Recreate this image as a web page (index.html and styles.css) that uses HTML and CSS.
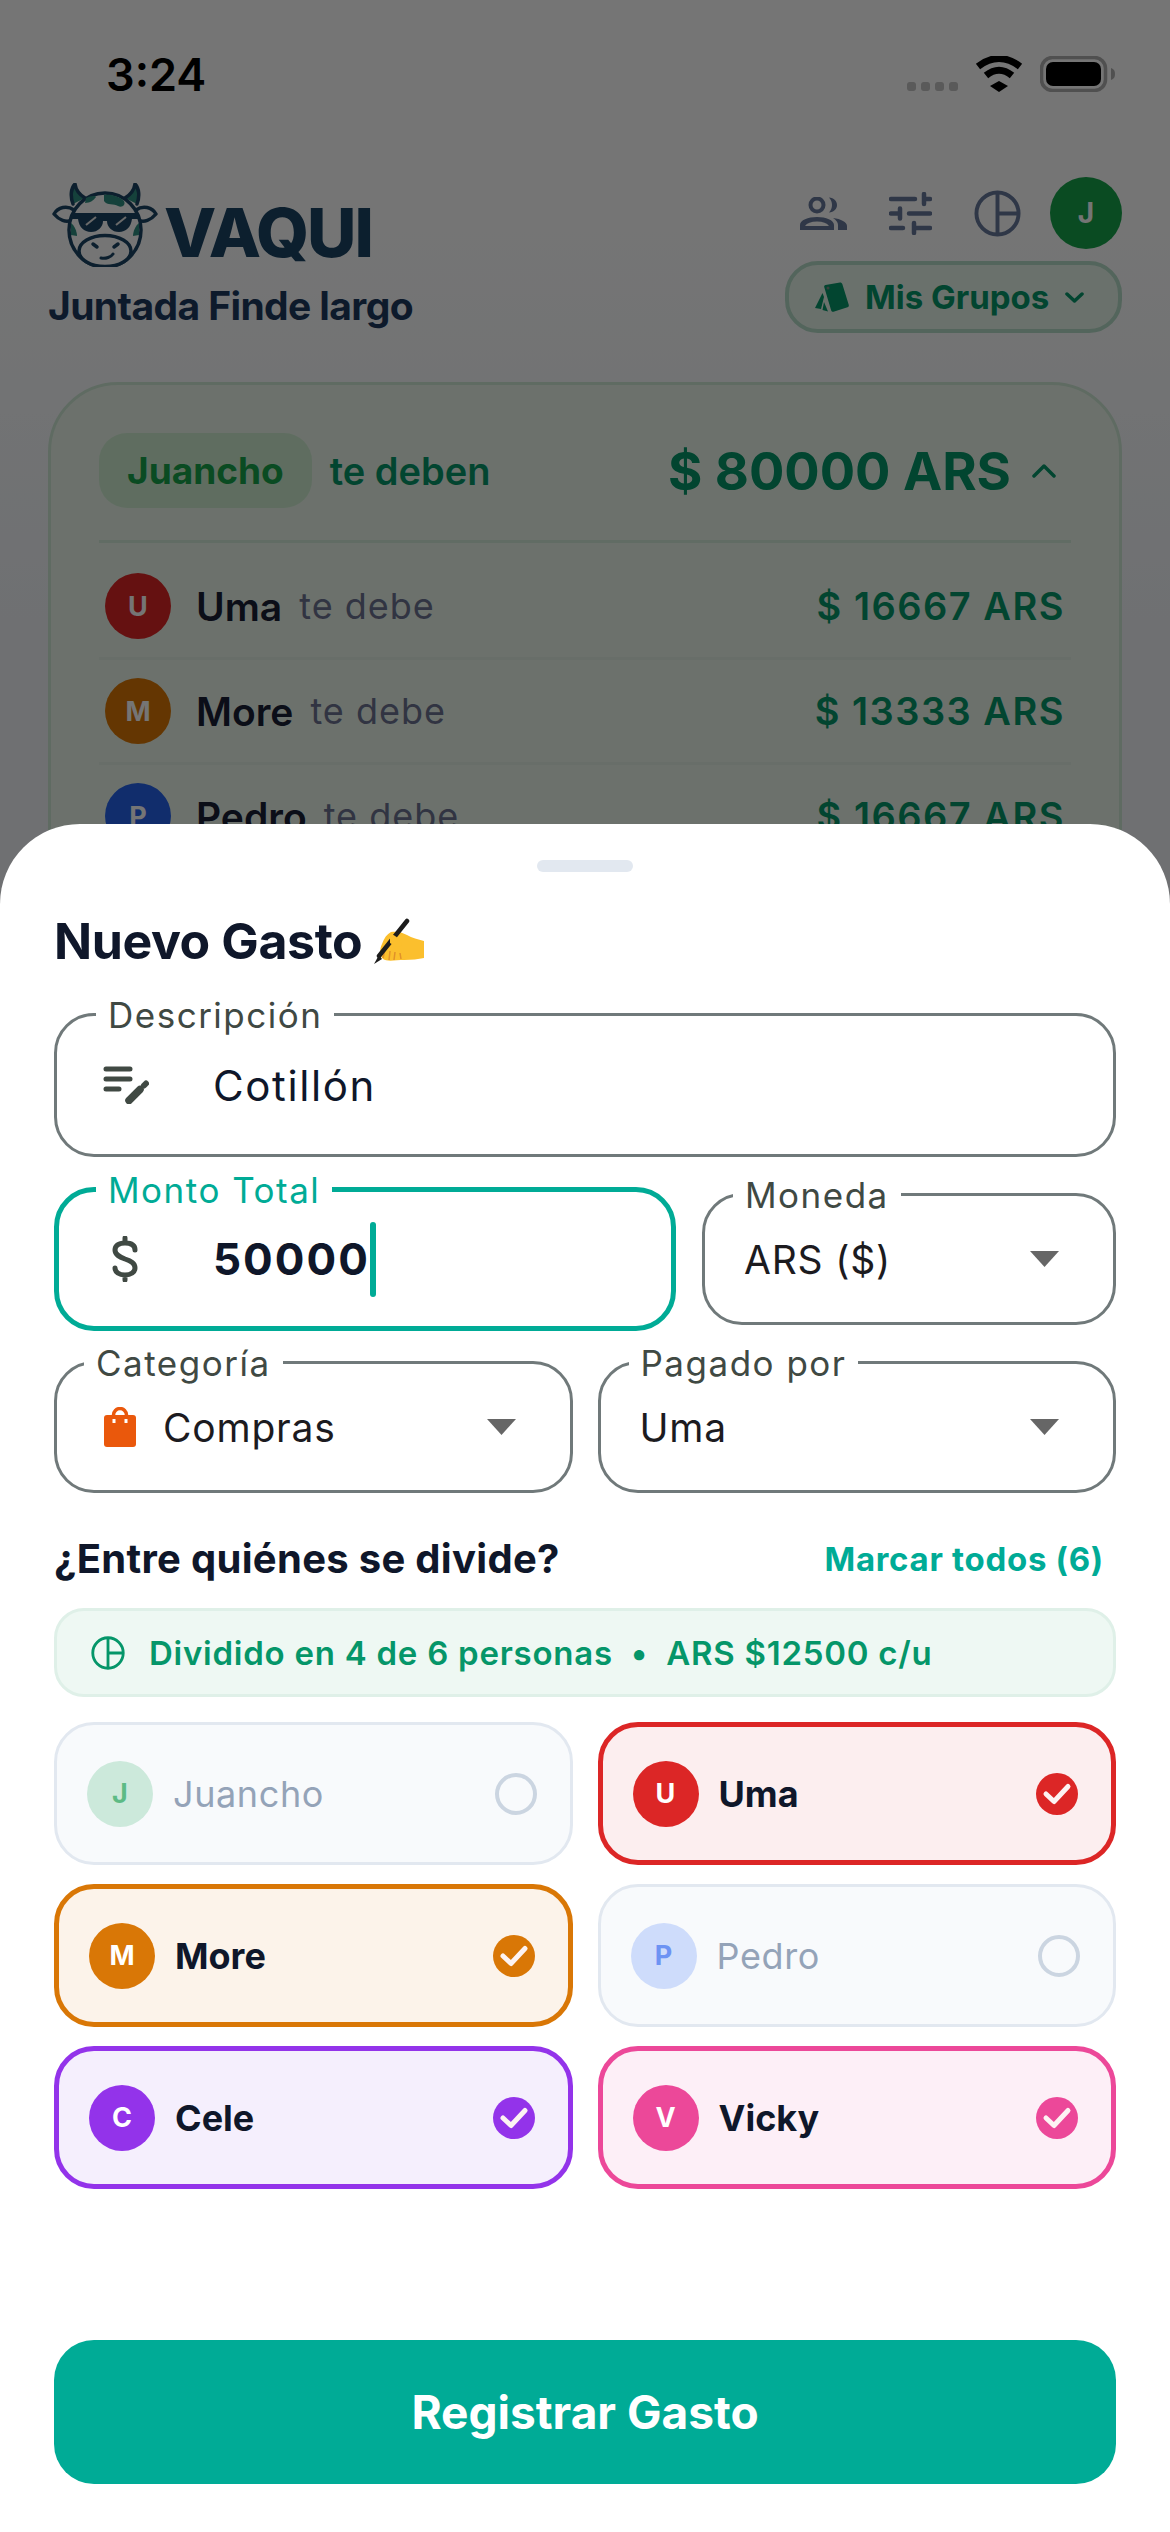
FILE: index.html

```html
<!DOCTYPE html>
<html lang="es">
<head>
  <meta charset="UTF-8" />
  <meta name="viewport" content="width=device-width, initial-scale=1.0" />
  <title>Vaqui - Nuevo Gasto</title>
  <link rel="stylesheet" href="styles.css">
</head>
<body>
  <svg class="sprites" width="0" height="0">
    <symbol id="pie" viewBox="0 0 48 48">
      <circle cx="24" cy="24" r="21.5" fill="none" stroke="currentColor" stroke-width="4" />
      <path d="M24 3V45M24 24H45" fill="none" stroke="currentColor" stroke-width="4" />
    </symbol>
    <symbol id="check" viewBox="0 0 42 42">
      <circle cx="21" cy="21" r="21" fill="currentColor" />
      <path d="M10 21L18 28.5L32 13.5" fill="none" stroke="#fdf3f3" stroke-width="5" stroke-linecap="round" stroke-linejoin="round" />
    </symbol>
    <symbol id="arrow" viewBox="0 0 29 16">
      <path d="M0 0H29L14.5 16Z" fill="#666" />
    </symbol>
  </svg>

  <div class="screen">
    <!-- the page behind the sheet -->
    <div class="backdrop">
      <div class="status-bar">
        <span class="clock">3:24</span>
        <div class="status-icons">
          <div class="signal"><i></i><i></i><i></i><i></i></div>
          <svg class="wifi" width="48" height="36" viewBox="0 0 48 36">
            <path d="M3 10.5Q24 -5.500 45 10.500" fill="none" stroke="#000" stroke-width="7" />
            <path d="M11 19.500Q24 9 37 19.500" fill="none" stroke="#000" stroke-width="7" />
            <path d="M24 25L33 30L24 36L15 30Z" fill="#000" />
          </svg>
          <svg class="battery" width="75" height="36" viewBox="0 0 75 36">
            <rect x="1.500" y="1.500" width="64" height="33" rx="11" fill="none" stroke="#505050" stroke-width="3.500" />
            <rect x="6" y="6" width="55" height="24" rx="7" fill="#000" />
            <path d="M71 12C74 13 75 15 75 18C75 21 74 23 71 24Z" fill="#505050" />
          </svg>
        </div>
      </div>

      <header class="top-bar">
        <div class="brand">
          <div class="logo">
            <svg class="cow" width="106" height="84" viewBox="0 0 106 84">
              <g fill="none" stroke="#1c4565" stroke-width="3.500" stroke-linejoin="round" stroke-linecap="round">
                <path d="M21 21C18 13 19 5 23 1C24 8 28 12 33 15" fill="#2f8f80" />
                <path d="M85 21C88 13 87 5 83 1C82 8 78 12 73 15" fill="#2f8f80" />
                <path d="M22 27C15 22 6 24 2 31C7 37 14 40 20 37" fill="#fff" />
                <path d="M84 27C91 22 100 24 104 31C99 37 92 40 86 37" fill="#fff" />
                <ellipse cx="53" cy="47" rx="36" ry="37" fill="#fff" />
              </g>
              <path d="M52 12C56 11 66 12 72 18C74 22 70 25 66 23C62 20 55 23 52 18Z" fill="#2f8f80" />
              <path d="M34 15C38 13 43 12 44 14C42 17 38 20 33 20Z" fill="#2f8f80" />
              <path d="M19 40C22 42 25 48 25 53L19 52Z" fill="#2f8f80" />
              <path d="M87 40C84 42 81 48 81 53L87 52Z" fill="#2f8f80" />
              <path d="M19 30H87V36H80C79 44 74 49 67 49C60 49 55 44 55 38H51C51 44 46 49 39 49C32 49 27 44 26 36H19Z" fill="#1c4565" />
              <path d="M34 42L44 34M64 42L74 34" stroke="#e8e8e8" stroke-width="2" />
              <ellipse cx="53" cy="68" rx="26" ry="15.500" fill="#fff" stroke="#1c4565" stroke-width="3.500" />
              <path d="M41 61L45 64M66 61L62 64" stroke="#1c4565" stroke-width="3.500" stroke-linecap="round" />
              <path d="M49 75C54 76 59 74 61 71" fill="none" stroke="#1c4565" stroke-width="3" stroke-linecap="round" />
            </svg>
            <span class="wordmark">VAQUI</span>
          </div>
          <h1 class="group-name">Juntada Finde largo</h1>
        </div>
        <div class="top-actions">
          <div class="action-row">
            <svg class="action-icon" width="47" height="33" viewBox="0 0 47 33">
              <circle cx="17" cy="8" r="6.500" fill="none" stroke="currentColor" stroke-width="4" />
              <path d="M29 0.500C34 1 37 4 37 8C37 12 34 15 29 15.500C31 13 32 11 32 8C32 5 31 3 29 0.500Z" fill="currentColor" />
              <path d="M0 33V28C0 23 8 20 17 20C26 20 34 23 34 28V33ZM5 29H29C27 26 23 24.500 17 24.500C11 24.500 7 26 5 29Z" fill="currentColor" fill-rule="evenodd" />
              <path d="M33 21C41 22 47 25 47 29V33H38V28C38 25 36 23 33 21Z" fill="currentColor" />
            </svg>
            <svg class="action-icon" width="43" height="43" viewBox="0 0 43 43">
              <path d="M2 7H26M35 2V12M35 7H41M2 21.500H11M11 16.500V26.500M20 21.500H41M2 36H14M25 31V41M25 36H41" fill="none" stroke="currentColor" stroke-width="4.500" stroke-linecap="round" />
            </svg>
            <svg class="action-icon" width="47" height="47"><use href="#pie" /></svg>
            <span class="avatar avatar-top">J</span>
          </div>
          <div class="groups-pill">
            <svg width="34" height="30" viewBox="0 0 34 30">
              <path d="M10.500 3L25 0.500C26 0.400 27 1 27.300 2L33.800 23C34 24 33.500 25 32.500 25.300L18.500 29.800C17.500 30 16.500 29.500 16.200 28.500L9.200 5C9 4 9.500 3.200 10.500 3Z" fill="currentColor" />
              <circle cx="13" cy="6" r="1.500" fill="#7d8a83" />
              <path d="M7.500 11L0 26L6 27L9 15ZM9 20L7.500 28L13 29.500Z" fill="currentColor" />
            </svg>
            <span>Mis Grupos</span>
            <svg width="19" height="11" viewBox="0 0 19 11">
              <path d="M2 2L9.500 9L17 2" fill="none" stroke="currentColor" stroke-width="3.500" stroke-linecap="round" stroke-linejoin="round" />
            </svg>
          </div>
        </div>
      </header>

      <section class="balance">
        <div class="balance-head">
          <div class="balance-who">
            <span class="name-chip">Juancho</span>
            <span class="owed-label">te deben</span>
          </div>
          <div class="balance-total">
            <span>$ 80000 ARS</span>
            <svg width="24" height="14" viewBox="0 0 24 14">
              <path d="M2 12L12 2L22 12" fill="none" stroke="currentColor" stroke-width="3.500" stroke-linecap="round" stroke-linejoin="round" />
            </svg>
          </div>
        </div>
        <ul class="debt-list">
          <li class="debt-row">
            <span class="avatar avatar-uma">U</span>
            <span class="debt-name">Uma</span>
            <span class="debt-note">te debe</span>
            <span class="debt-amount">$ 16667 ARS</span>
          </li>
          <li class="debt-row">
            <span class="avatar avatar-more">M</span>
            <span class="debt-name">More</span>
            <span class="debt-note">te debe</span>
            <span class="debt-amount">$ 13333 ARS</span>
          </li>
          <li class="debt-row">
            <span class="avatar avatar-pedro">P</span>
            <span class="debt-name">Pedro</span>
            <span class="debt-note">te debe</span>
            <span class="debt-amount">$ 16667 ARS</span>
          </li>
        </ul>
      </section>
    </div>

    <div class="scrim"></div>

    <!-- bottom sheet -->
    <section class="sheet">
      <div class="handle"></div>
      <h2 class="sheet-title">
        <span>Nuevo Gasto</span>
        <svg width="50" height="47" viewBox="0 0 50 47">
          <path d="M50 23C44 21 38 20 33 17C28 14 22 13 17 14C13 16 10 20 8 26C5 32 6 38 9 41C13 44 22 42 30 42C38 42 44 41 50 40Z" fill="#fbbf2d" />
          <path d="M11 32L9 40M16 33L15 42M21 34L20 42M26 35L27 41" stroke="#e0922a" stroke-width="1.500" fill="none" />
          <path d="M33 3L5 38" stroke="#1c1c1c" stroke-width="4.500" stroke-linecap="round" />
          <path d="M5 37L0 46L8 41Z" fill="#1c1c1c" />
          <path d="M16 15C22 18 27 22 28 27C25 30 20 28 16 25Z" fill="#fbbf2d" />
        </svg>
      </h2>

      <div class="field field-desc">
        <span class="field-label">Descripción</span>
        <span class="field-icon">
          <svg width="46" height="38" viewBox="0 0 46 38">
            <path d="M3 3H27M3 13H27M3 23H16" fill="none" stroke="currentColor" stroke-width="5" stroke-linecap="round" />
            <path d="M26 34.500L37 23.500" fill="none" stroke="currentColor" stroke-width="7.500" stroke-linecap="round" />
            <path d="M41 19.500L43 17.500" fill="none" stroke="currentColor" stroke-width="6" stroke-linecap="round" />
          </svg>
        </span>
        <span class="field-value">Cotillón</span>
      </div>

      <div class="field-row">
        <div class="field field-focus">
          <span class="field-label">Monto Total</span>
          <span class="field-icon">
            <svg width="26" height="46" viewBox="0 0 26 46">
              <path d="M23 14C23 9 19 7 13 7C6 7 3 10 3 14C3 19 8 21 13 23C19 25 23 27 23 32C23 36 19 39 13 39C7 39 3 36 3 32M13 2V7M13 39V44" fill="none" stroke="currentColor" stroke-width="5" stroke-linecap="round" />
            </svg>
          </span>
          <span class="field-value field-strong">50000</span>
          <span class="caret"></span>
        </div>
        <div class="field field-select field-currency">
          <span class="field-label">Moneda</span>
          <span class="select-value">ARS ($)</span>
          <svg class="select-arrow" width="29" height="16"><use href="#arrow" /></svg>
        </div>
      </div>

      <div class="field-pair">
        <div class="field field-select field-category">
          <span class="field-label">Categoría</span>
          <svg class="bag" width="32" height="40" viewBox="0 0 32 40">
            <path d="M9.500 10V8A6.500 6.500 0 0 1 22.500 8V10" fill="none" stroke="#ea580c" stroke-width="3.500" />
            <rect y="8" width="32" height="32" rx="3" fill="#ea580c" />
            <path d="M10 12V16M22 12V16" stroke="#fff" stroke-width="3" />
          </svg>
          <span class="select-value">Compras</span>
          <svg class="select-arrow" width="29" height="16"><use href="#arrow" /></svg>
        </div>
        <div class="field field-select">
          <span class="field-label">Pagado por</span>
          <span class="select-value">Uma</span>
          <svg class="select-arrow" width="29" height="16"><use href="#arrow" /></svg>
        </div>
      </div>

      <div class="split-head">
        <span class="split-title">¿Entre quiénes se divide?</span>
        <span class="split-all">Marcar todos (6)</span>
      </div>

      <div class="split-info">
        <svg width="34" height="34"><use href="#pie" /></svg>
        <span>Dividido en 4 de 6 personas</span>
        <span class="split-dot">•</span>
        <span>ARS $12500 c/u</span>
      </div>

      <div class="people">
        <div class="person">
          <span class="avatar avatar-off-green">J</span>
          <span class="person-name">Juancho</span>
          <span class="radio"></span>
        </div>
        <div class="person person-on person-red">
          <span class="avatar">U</span>
          <span class="person-name">Uma</span>
          <svg class="tick" width="42" height="42"><use href="#check" /></svg>
        </div>
        <div class="person person-on person-orange">
          <span class="avatar">M</span>
          <span class="person-name">More</span>
          <svg class="tick" width="42" height="42"><use href="#check" /></svg>
        </div>
        <div class="person">
          <span class="avatar avatar-off-blue">P</span>
          <span class="person-name">Pedro</span>
          <span class="radio"></span>
        </div>
        <div class="person person-on person-purple">
          <span class="avatar">C</span>
          <span class="person-name">Cele</span>
          <svg class="tick" width="42" height="42"><use href="#check" /></svg>
        </div>
        <div class="person person-on person-pink">
          <span class="avatar">V</span>
          <span class="person-name">Vicky</span>
          <svg class="tick" width="42" height="42"><use href="#check" /></svg>
        </div>
      </div>

      <button class="submit" type="button">Registrar Gasto</button>
    </section>
  </div>
</body>
</html>
```

FILE: styles.css

```css
* {
  box-sizing: border-box;
}
body {
  margin: 0;
  font-family: Inter, "Liberation Sans", sans-serif;
  background: #fff;
}
ul {
  list-style: none;
  margin: 0;
  padding: 0;
}
h1, h2 {
  margin: 0;
}
.sprites {
  position: absolute;
}
.screen {
  position: relative;
  width: 1170px;
  height: 2532px;
  overflow: hidden;
}

/* background page */
.backdrop {
  height: 100%;
  padding: 0 48px;
  background: linear-gradient(#fff 200px, #f1f5f9 620px);
}
.status-bar {
  position: relative;
  z-index: 2;
  display: flex;
  align-items: center;
  justify-content: space-between;
  height: 148px;
  padding: 0 7px 0 58px;
}
.clock {
  font-size: 45px;
  font-weight: 600;
  color: #000;
}
.status-icons {
  display: flex;
  align-items: flex-end;
  gap: 17px;
}
.signal {
  display: flex;
  gap: 5px;
  margin-bottom: 1px;
}
.signal i {
  width: 9px;
  height: 9px;
  border-radius: 3px;
  background: #5a5a5a;
}
.top-bar {
  display: flex;
  justify-content: space-between;
  margin-top: 29px;
}
.brand {
  padding-top: 6px;
}
.logo {
  display: flex;
  gap: 6px;
  padding-left: 4px;
}
.wordmark {
  align-self: flex-end;
  font-size: 68px;
  line-height: 70px;
  font-weight: 800;
  letter-spacing: -2px;
  color: #1c4565;
}
.group-name {
  margin-top: 17px;
  font-size: 39px;
  line-height: 44px;
  font-weight: 700;
  letter-spacing: -0.6px;
  color: #1e3a5f;
}
.top-actions {
  display: flex;
  flex-direction: column;
  align-items: flex-end;
  gap: 12px;
}
.action-row {
  display: flex;
  align-items: center;
  gap: 42px;
  color: #66789b;
}
.action-row .avatar-top {
  margin-left: -13px;
  width: 72px;
  height: 72px;
  font-size: 28px;
  background: #16a34a;
}
.groups-pill {
  display: flex;
  align-items: center;
  width: 337px;
  height: 72px;
  padding-left: 26px;
  border: 4px solid #b5dcc8;
  border-radius: 33px;
  background: #e8f6ec;
  color: #059669;
  font-size: 33px;
  font-weight: 700;
}
.groups-pill span {
  margin: 0 16px 0 16px;
}
.avatar {
  display: flex;
  flex: none;
  align-items: center;
  justify-content: center;
  width: 66px;
  height: 66px;
  border-radius: 50%;
  color: #fff;
  font-size: 27px;
  font-weight: 700;
}
.balance {
  margin-top: 49px;
  height: 900px;
  padding: 48px 48px 0;
  border: 3px solid #cfe9d6;
  border-radius: 70px;
  background: #ebf7eb;
}
.balance-head {
  display: flex;
  align-items: center;
  justify-content: space-between;
  padding-bottom: 32px;
  border-bottom: 3px solid #d4ecd9;
}
.balance-who {
  display: flex;
  align-items: center;
  gap: 18px;
}
.name-chip {
  display: flex;
  align-items: center;
  height: 75px;
  padding: 0 28px;
  border-radius: 28px;
  background: #cfeed2;
  color: #16a34a;
  font-size: 37px;
  font-weight: 700;
}
.owed-label {
  font-size: 38px;
  font-weight: 600;
  color: #059669;
}
.balance-total {
  display: flex;
  align-items: center;
  gap: 21px;
  padding-right: 15px;
  color: #059669;
  font-size: 52.500px;
  font-weight: 700;
}
.debt-list {
  padding-top: 12px;
}
.debt-row {
  display: flex;
  align-items: center;
  padding: 18px 6px;
  border-bottom: 3px solid #e2efe4;
}
.debt-name {
  margin-left: 25px;
  font-size: 39px;
  font-weight: 600;
  color: #1a2035;
}
.debt-note {
  margin-left: 17px;
  font-size: 36px;
  letter-spacing: 1px;
  color: #6b7291;
}
.debt-amount {
  margin-left: auto;
  font-size: 38px;
  font-weight: 600;
  letter-spacing: 1.500px;
  color: #059669;
}
.avatar-uma {
  background: #dc2626;
}
.avatar-more {
  background: #d97706;
}
.avatar-pedro {
  background: #2563eb;
}

.scrim {
  position: absolute;
  inset: 0;
  z-index: 1;
  background: rgba(0, 0, 0, 0.54);
}

/* bottom sheet */
.sheet {
  position: absolute;
  top: 824px;
  left: 0;
  right: 0;
  bottom: 0;
  z-index: 3;
  display: flex;
  flex-direction: column;
  padding: 36px 54px 48px;
  background: #fff;
  border-radius: 80px 80px 0 0;
}
.handle {
  align-self: center;
  width: 96px;
  height: 12px;
  border-radius: 6px;
  background: #e2e8f0;
}
.sheet-title {
  display: flex;
  align-items: center;
  gap: 12px;
  height: 60px;
  margin-top: 39px;
  font-size: 50px;
  font-weight: 700;
  letter-spacing: -0.4px;
  color: #0f172a;
}
.field {
  position: relative;
  display: flex;
  align-items: center;
  height: 132px;
  border: 3px solid #70797a;
  border-radius: 40px;
  color: #404943;
}
.field-label {
  position: absolute;
  top: -1.5px;
  left: 28px;
  padding: 0 12px;
  transform: translateY(-50%);
  background: #fff;
  font-size: 35px;
  line-height: 40px;
  letter-spacing: 1.500px;
  white-space: nowrap;
}
.field-desc {
  height: 144px;
  margin-top: 42px;
  padding-left: 46px;
}
.field-desc .field-label {
  left: 39px;
}
.field-icon {
  display: flex;
  flex: none;
  width: 110px;
}
.field-value {
  font-size: 42px;
  letter-spacing: 1.600px;
  color: #0f172a;
}
.field-strong {
  font-size: 44px;
  font-weight: 700;
  letter-spacing: 2px;
}
.field-row {
  display: flex;
  align-items: center;
  gap: 26px;
  margin-top: 30px;
}
.field-focus {
  flex: none;
  width: 622px;
  height: 144px;
  padding-left: 53px;
  border: 5px solid #00ab96;
  color: #404943;
}
.field-focus .field-label {
  top: -2.5px;
  left: 37px;
  color: #00ab96;
}
.field-focus .field-icon {
  width: 101px;
}
.caret {
  width: 6px;
  height: 75px;
  border-radius: 3px;
  background: #00ab96;
}
.field-select {
  justify-content: space-between;
  padding: 0 54px 0 39px;
}
.field-currency {
  flex: 1;
}
.select-value {
  font-size: 39px;
  letter-spacing: 0.8px;
  color: #1c1b1f;
}
.select-arrow {
  flex: none;
}
.field-pair {
  display: grid;
  grid-template-columns: 1fr 1fr;
  gap: 25px;
  margin-top: 30px;
}
.field-category {
  padding-left: 47px;
}
.field-category .field-label {
  left: 27px;
}
.field-category .select-value {
  margin-left: 27px;
  margin-right: auto;
}
.bag {
  flex: none;
}
.split-head {
  display: flex;
  align-items: center;
  justify-content: space-between;
  height: 50px;
  margin-top: 40px;
  padding-right: 12px;
}
.split-title {
  font-size: 40px;
  font-weight: 700;
  letter-spacing: 0.3px;
  color: #0f172a;
}
.split-all {
  margin-top: 2px;
  font-size: 33px;
  font-weight: 700;
  letter-spacing: 0.7px;
  color: #00ab96;
}
.split-info {
  display: flex;
  align-items: center;
  height: 89px;
  margin-top: 25px;
  padding-left: 34px;
  border: 3px solid #dff0e8;
  border-radius: 30px;
  background: #eef8f3;
  color: #059669;
  font-size: 33px;
  font-weight: 600;
  letter-spacing: 0.75px;
}
.split-info svg {
  margin-right: 24px;
}
.split-dot {
  margin: 0 18px;
}
.people {
  display: grid;
  grid-template-columns: 1fr 1fr;
  gap: 19px 25px;
  margin-top: 25px;
}
.person {
  display: flex;
  align-items: center;
  height: 143px;
  padding: 0 33px 0 30px;
  border: 3px solid #e2e8f0;
  border-radius: 40px;
  background: #f8fafc;
}
.person-name {
  margin-left: 20px;
  margin-right: auto;
  font-size: 36px;
  letter-spacing: 0.6px;
  color: #94a3b8;
}
.person-on {
  --person: #000;
  border: 5px solid var(--person);
}
.person-on .avatar {
  background: var(--person);
}
.person-on .person-name {
  font-weight: 700;
  letter-spacing: 0;
  color: #0f172a;
}
.tick {
  flex: none;
  color: var(--person);
}
.person-red {
  --person: #dc2626;
  background: #fceeef;
}
.person-orange {
  --person: #d97706;
  background: #fcf3ea;
}
.person-purple {
  --person: #9333ea;
  background: #f5effd;
}
.person-pink {
  --person: #ec4899;
  background: #fdeff7;
}
.avatar-off-green {
  background: #cce9db;
  color: #5dbb85;
}
.avatar-off-blue {
  background: #cedcfb;
  color: #6d93f3;
}
.radio {
  width: 42px;
  height: 42px;
  border: 4px solid #cbd5e1;
  border-radius: 50%;
}
.submit {
  height: 144px;
  margin-top: auto;
  border: none;
  border-radius: 40px;
  background: #00ab96;
  color: #fff;
  font-family: inherit;
  font-size: 46px;
  font-weight: 700;
}
```
